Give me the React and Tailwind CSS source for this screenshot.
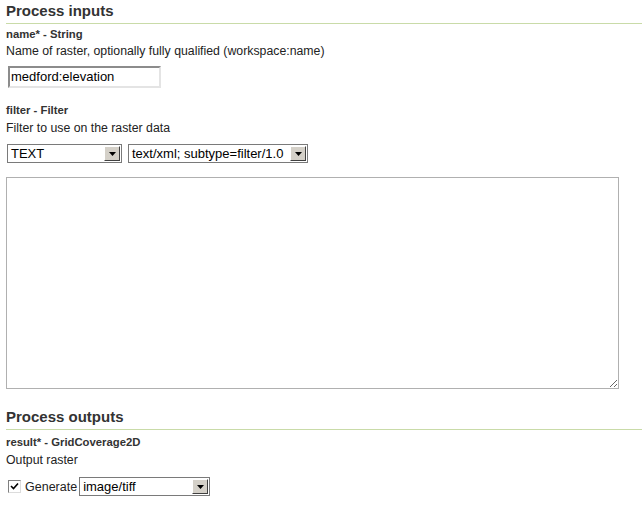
import React from "react";

function Arrow() {
  return (
    <span className="flex h-full w-[16px] shrink-0 items-center justify-center border-t border-l border-t-white border-l-white border-r border-b border-r-[#404040] border-b-[#404040] bg-[#d4d0c8]">
      <svg width="7" height="4" viewBox="0 0 7 4">
        <path d="M0 0H7L3.5 4Z" fill="#000" />
      </svg>
    </span>
  );
}

function Select({ width, value }) {
  return (
    <div
      className="flex h-[19px] items-stretch border border-[#7a7a7a] bg-white p-[1px]"
      style={{ width }}
    >
      <span className="flex-1 overflow-hidden whitespace-nowrap pl-[2px] text-[13px] leading-[15px] text-black">
        {value}
      </span>
      <Arrow />
    </div>
  );
}

export default function App() {
  return (
    <div
      className="h-[506px] w-[642px] overflow-hidden bg-white pl-[6px] text-[#222]"
      style={{ fontFamily: '"Liberation Sans", Arial, sans-serif' }}
    >
      <h2 className="border-b border-[#c9dba8] pt-[2px] pb-[3px] text-[15px] font-bold leading-[18px] text-[#333]">
        Process inputs
      </h2>
      <div className="mt-[4px] text-[11.3px] font-bold leading-[13px] text-[#333]">name* - String</div>
      <div className="mt-[3px] text-[12.3px] leading-[14px]">
        Name of raster, optionally fully qualified (workspace:name)
      </div>
      <div className="mt-[8px] ml-[2px] flex h-[22px] w-[153px] items-center border-2 border-t-[#8c8c8c] border-l-[#8c8c8c] border-r-[#e4e4e4] border-b-[#e4e4e4] bg-white pl-[1px] text-[13px] text-black">
        medford:elevation
      </div>
      <div className="mt-[16px] text-[11.3px] font-bold leading-[13px] text-[#333]">filter - Filter</div>
      <div className="mt-[4px] text-[12.3px] leading-[14px]">Filter to use on the raster data</div>
      <div className="mt-[9px] flex gap-[6px] pl-[1px]">
        <Select width={115} value="TEXT" />
        <Select width={180} value="text/xml; subtype=filter/1.0" />
      </div>
      <textarea className="mt-[14px] block h-[212px] w-[613px] resize border border-[#b0b0b0] bg-white" />
      <h2 className="mt-[19px] border-b border-[#c9dba8] pb-[3px] text-[15px] font-bold leading-[18px] text-[#333]">
        Process outputs
      </h2>
      <div className="mt-[6px] text-[11.3px] font-bold leading-[13px] text-[#333]">result* - GridCoverage2D</div>
      <div className="mt-[4px] text-[12.3px] leading-[14px]">Output raster</div>
      <div className="mt-[10px] flex items-center">
        <span className="ml-[2px] flex h-[13px] w-[13px] items-center justify-center border border-t-[#808080] border-l-[#808080] border-r-[#dcdcdc] border-b-[#dcdcdc] bg-white">
          <svg width="9" height="9" viewBox="0 0 9 9">
            <path d="M1 4L3.5 6.5L8 1.5" stroke="#000" strokeWidth="1.6" fill="none" />
          </svg>
        </span>
        <span className="ml-[4px] text-[12.5px] leading-[14px]">Generate</span>
        <span className="ml-[2px]">
          <Select width={131} value="image/tiff" />
        </span>
      </div>
    </div>
  );
}
